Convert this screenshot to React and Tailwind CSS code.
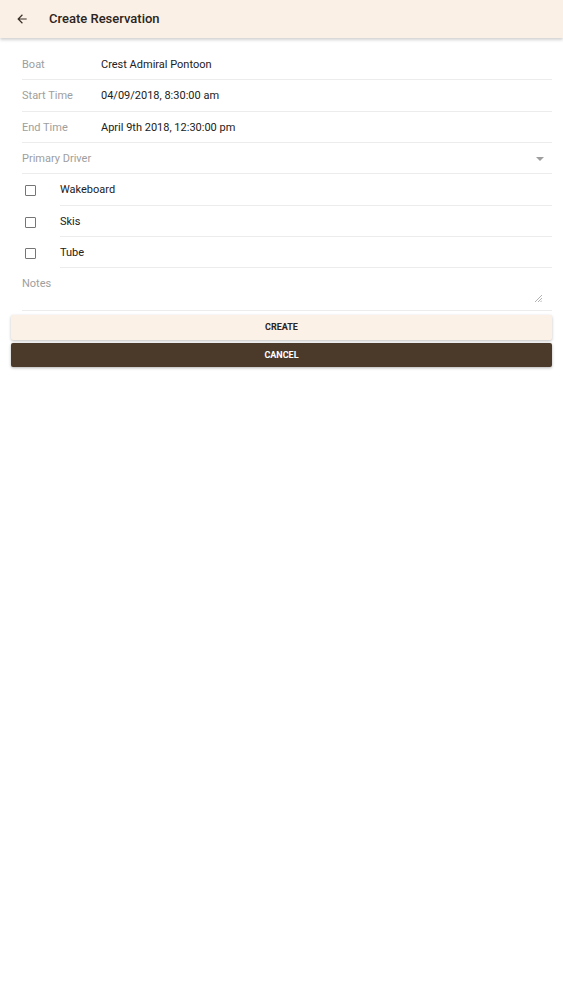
import React from 'react';

const font = { fontFamily: 'Roboto, "Liberation Sans", sans-serif' };

const Field = ({ label, value }) => (
  <div className="flex items-center h-[31.33px] pt-[2px] border-b border-[#ececec] text-[11px]">
    <span className="w-[79px] shrink-0 text-[#9e9e9e]">{label}</span>
    <span className="text-[#212121]">{value}</span>
  </div>
);

const Check = ({ label }) => (
  <div className="flex items-center h-[31.33px] text-[11px]">
    <div className="w-[38px] shrink-0 flex items-center pl-[3px] pt-[2px]">
      <span className="block w-[11px] h-[11px] border-[1.5px] border-[#757575] rounded-[1px]" />
    </div>
    <div className="flex-1 h-full flex items-center pt-[2px] border-b border-[#ececec]">
      <span className="text-[#212121]">{label}</span>
    </div>
  </div>
);

export default function App() {
  return (
    <div className="min-h-screen bg-white" style={font}>
      <header className="h-[38px] bg-[#fbf0e5] flex items-center shadow-[0_2px_3px_rgba(0,0,0,0.18)] relative">
        <svg className="ml-[15px] w-[14px] h-[14px]" viewBox="0 0 24 24" fill="#3a2f28">
          <path d="M20 11H7.83l5.59-5.59L12 4l-8 8 8 8 1.41-1.41L7.83 13H20v-2z" />
        </svg>
        <h1 className="ml-[20px] text-[13px] font-medium text-[#2b2420]">Create Reservation</h1>
      </header>

      <div className="pl-[22px] pr-[11px] pt-[11px]">
        <Field label="Boat" value="Crest Admiral Pontoon" />
        <Field label="Start Time" value="04/09/2018, 8:30:00 am" />
        <Field label="End Time" value="April 9th 2018, 12:30:00 pm" />
        <div className="flex items-center justify-between h-[31.33px] pt-[2px] border-b border-[#ececec] text-[11px]">
          <span className="text-[#9e9e9e]">Primary Driver</span>
          <span className="mr-[8px] w-0 h-0 border-l-[4px] border-r-[4px] border-t-[4px] border-l-transparent border-r-transparent border-t-[#9e9e9e]" />
        </div>
        <Check label="Wakeboard" />
        <Check label="Skis" />
        <Check label="Tube" />
        <div className="relative h-[43px] border-b border-[#ececec] pt-[8px] text-[11px] leading-[16px]">
          <span className="block text-[#9e9e9e]">Notes</span>
          <svg className="absolute right-[10px] bottom-[8px] w-[7px] h-[7px]" viewBox="0 0 7 7" stroke="#9e9e9e" strokeWidth="0.8">
            <path d="M7 0 L0 7 M7 3 L3 7 M7 5.5 L5.5 7" />
          </svg>
        </div>
      </div>

      <div className="pl-[11px] pr-[11px] mt-[4px] flex flex-col gap-[3px]">
        <button className="h-[25px] w-full bg-[#fbf1e7] text-[9px] font-bold text-[#2b2420] shadow-[0_1px_3px_rgba(0,0,0,0.25)] rounded-[2px]">
          CREATE
        </button>
        <button className="h-[24px] w-full bg-[#4b3a2a] text-[9px] font-bold text-white shadow-[0_1px_3px_rgba(0,0,0,0.3)] rounded-[2px]">
          CANCEL
        </button>
      </div>
    </div>
  );
}
